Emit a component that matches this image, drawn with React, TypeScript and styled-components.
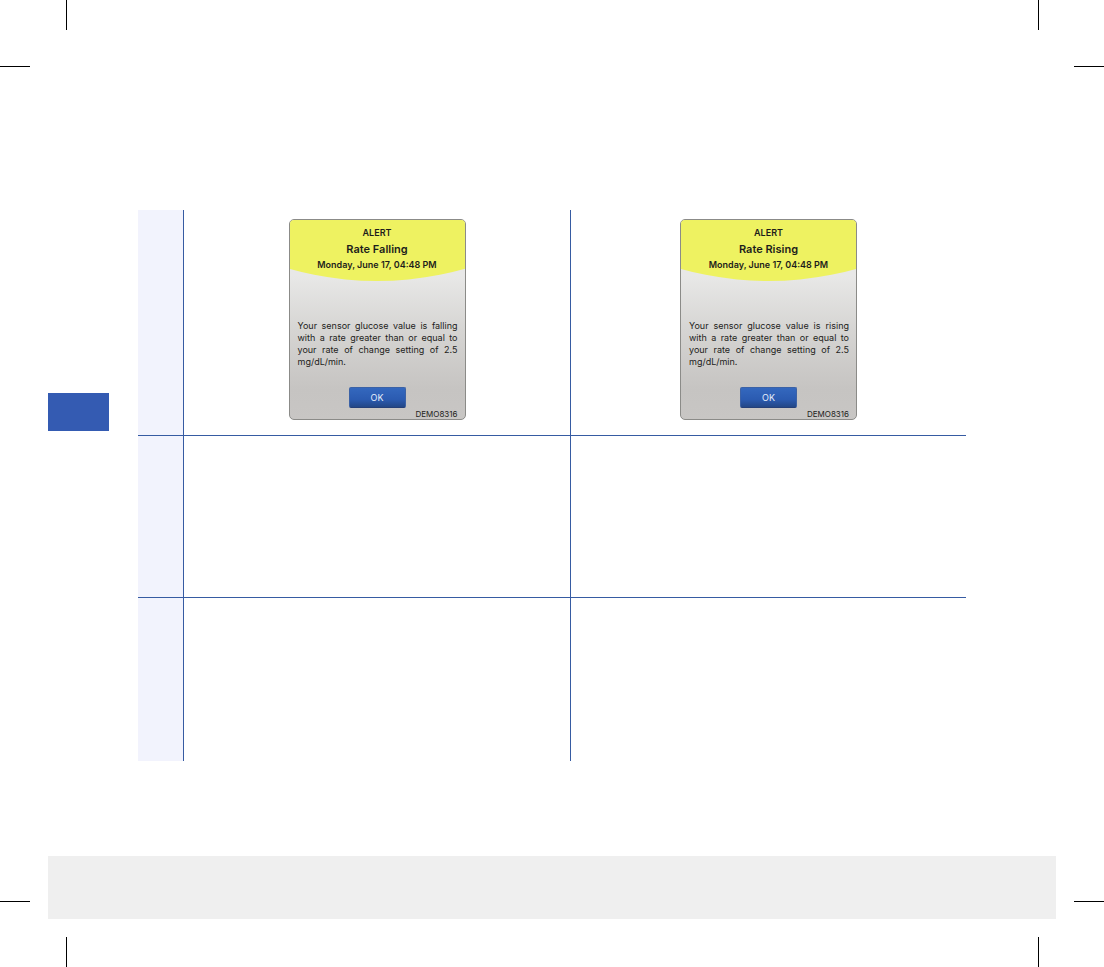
import React from "react";
import styled, { createGlobalStyle } from "styled-components";

const GlobalStyle = createGlobalStyle`
  *, *::before, *::after { box-sizing: border-box; }
  body {
    margin: 0;
    background: #ffffff;
    color: #1d1d1b;
    font-family: Inter, "Liberation Sans", sans-serif;
  }
`;

const rule = "#365ba2";

const Page = styled.div`
  position: relative;
  display: flex;
  flex-direction: column;
  min-height: 100vh;
  padding: 210px 48px 48px;
`;

type Edge = { $bottom?: boolean; $right?: boolean };

const CropMark = styled.svg<Edge>`
  position: absolute;
  ${(p) => (p.$bottom ? "bottom: 0;" : "top: 0;")}
  ${(p) => (p.$right ? "right: 0;" : "left: 0;")}
  pointer-events: none;
`;

const Content = styled.main`
  display: flex;
  align-items: flex-start;
  gap: 29px;
  padding-right: 90px;
`;

const ChapterTab = styled.aside`
  flex: 0 0 61px;
  height: 38px;
  margin-top: 183px;
  background: #345bb2;
`;

const AlertTable = styled.table`
  flex: 1;
  min-width: 0;
  table-layout: fixed;
  border-spacing: 0;
`;

const LabelColumn = styled.col`
  width: 46px;
`;

const FirstColumn = styled.col`
  width: 46.74%;
`;

const Row = styled.tr<{ $height: number }>`
  height: ${(p) => p.$height}px;

  &:not(:last-child) > * {
    border-bottom: 1px solid ${rule};
  }
`;

const RowLabel = styled.th`
  padding: 0;
  background: #f2f3fd;
  border-right: 1px solid ${rule};
`;

const Cell = styled.td`
  padding: 9px 8px 0;
  vertical-align: top;

  &:not(:last-child) {
    border-right: 1px solid ${rule};
  }
`;

const Card = styled.section`
  display: flex;
  flex-direction: column;
  width: 177px;
  height: 201px;
  margin: 0 auto;
  overflow: hidden;
  border: 1px solid #8b8b88;
  border-radius: 5px;
  background: linear-gradient(#e8e8e7 28%, #d6d5d3 55%, #c6c4c2 85%, #c8c6c4);
`;

const CardHeader = styled.header`
  height: 61px;
  padding-top: 6px;
  background: #eef261;
  clip-path: circle(322px at 50% -261px);
  text-align: center;
  font-weight: 600;
  font-size: 9px;
`;

const Kind = styled.p`
  margin: 0;
  line-height: 14px;
`;

const Title = styled.h2`
  margin: 0;
  font-size: 11px;
  font-weight: 600;
  line-height: 18px;
`;

const Message = styled.p`
  margin: 39px 7px 0 8px;
  font-size: 9px;
  line-height: 12px;
  text-align: justify;
`;

const OkButton = styled.button`
  flex: none;
  align-self: center;
  width: 57px;
  height: 21px;
  margin-top: 19px;
  padding: 0;
  border: 1px solid #3c62a6;
  border-bottom-color: #243f78;
  border-radius: 2px;
  background: linear-gradient(#3468be, #2b5bb1 60%, #234787);
  color: #e6eefb;
  font: 9px/19px Inter, "Liberation Sans", sans-serif;
`;

const Code = styled.p`
  margin: auto 7px 0;
  font-size: 8px;
  line-height: 10px;
  text-align: right;
`;

function Corner({ $bottom, $right }: Edge) {
  const x = $right ? 0 : 66;
  const y = $bottom ? 0 : 66;
  return (
    <CropMark
      $bottom={$bottom}
      $right={$right}
      width={$right ? 66 : 67}
      height={$bottom ? 66 : 67}
      aria-hidden="true"
    >
      <rect x={x} y={$bottom ? 36 : 0} width="1" height="30" />
      <rect x={$right ? 36 : 0} y={y} width="30" height="1" />
    </CropMark>
  );
}

function AlertCard({ title, change }: { title: string; change: string }) {
  return (
    <Card>
      <CardHeader>
        <Kind>ALERT</Kind>
        <Title>{title}</Title>
        <Kind>Monday, June 17, 04:48 PM</Kind>
      </CardHeader>
      <Message>
        Your sensor glucose value is {change} with a rate greater than or equal
        to your rate of change setting of 2.5 mg/dL/min.
      </Message>
      <OkButton type="button">OK</OkButton>
      <Code>DEMO8316</Code>
    </Card>
  );
}

const Footer = styled.footer`
  height: 63px;
  margin-top: auto;
  background: #efefef;
`;

export default function App() {
  return (
    <>
      <GlobalStyle />
      <Page>
        <Content>
          <ChapterTab />
          <AlertTable>
            <colgroup>
              <LabelColumn />
              <FirstColumn />
              <col />
            </colgroup>
            <tbody>
              <Row $height={226}>
                <RowLabel scope="row" />
                <Cell>
                  <AlertCard title="Rate Falling" change="falling" />
                </Cell>
                <Cell>
                  <AlertCard title="Rate Rising" change="rising" />
                </Cell>
              </Row>
              <Row $height={162}>
                <RowLabel scope="row" />
                <Cell />
                <Cell />
              </Row>
              <Row $height={163}>
                <RowLabel scope="row" />
                <Cell />
                <Cell />
              </Row>
            </tbody>
          </AlertTable>
        </Content>
        <Footer />
        <Corner />
        <Corner $right />
        <Corner $bottom />
        <Corner $bottom $right />
      </Page>
    </>
  );
}
